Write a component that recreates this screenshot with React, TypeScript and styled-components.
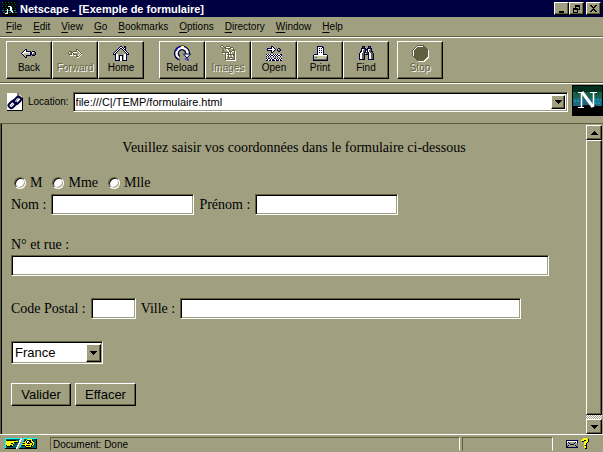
import React from "react";
import styled, { createGlobalStyle, css } from "styled-components";

const FACE = "#a0a080";
const SHADE = "#606040";
const NAVY = "#000040";

const Global = createGlobalStyle`
  *, *::before, *::after { box-sizing: border-box; }
  body { margin: 0; background: ${FACE}; color: #000; font: 10px/12px "Liberation Sans", Arial, sans-serif; }
  button, input, select { font: inherit; color: inherit; border-radius: 0; margin: 0; }
`;

const raised = css`
  background: ${FACE};
  border: 1px solid;
  border-color: #fff #000 #000 #fff;
  box-shadow: inset -1px -1px 0 ${SHADE};
`;

const sunken = css`
  background: #fff;
  border: 1px solid;
  border-color: ${SHADE} #fff #fff ${SHADE};
  box-shadow: inset 1px 1px 0 #000, inset -1px -1px 0 ${FACE};
  outline: none;
`;

const COLORS: Record<string, string> = {
  N: NAVY, W: "#ffffff", K: "#000000", S: SHADE, G: "#008040", Y: "#ffff00",
  C: "#00ffff", L: "#c0c0a0", T: "#006060", F: FACE,
};

const Drawing = styled.svg`
  display: block;
  flex: none;
`;

function Pixels({ rows }: { rows: string[] }) {
  const width = Math.max(...rows.map((r) => r.length));
  return (
    <Drawing width={width} height={rows.length} viewBox={`0 0 ${width} ${rows.length}`} shapeRendering="crispEdges" aria-hidden="true">
      {rows.flatMap((row, y) =>
        [...row].map((c, x) =>
          COLORS[c] ? <rect key={`${x}-${y}`} x={x} y={y} width="1" height="1" fill={COLORS[c]} /> : null
        )
      )}
    </Drawing>
  );
}

const back = [
  "....NN..........",
  "...NWN..........",
  "..NWWNNNNN.NNN..",
  ".NWWWWWWWNNWWSN.",
  "NWWLLLLLLNNWSSN.",
  ".NLLLLLLLNNSSSN.",
  "..NLLNNNNN.NNN..",
  "...NLN..........",
  "....NN..........",
];
const forward = [
  ".........SS......",
  ".........SWS.....",
  "..SSS.SSSSFWS....",
  ".SWFSSWWWWFFWS...",
  ".SFFSWSFFFFFFWS..",
  "..SSSWSSSSFFWSW..",
  "...WWW.WWSFWSW...",
  ".........SSSW....",
  "..........WW.....",
];
const home = [
  ".......NN..NN...",
  "......NWWN.NN...",
  ".....NWNNWNWN...",
  "....NWN..NWNN...",
  "...NWN....NWN...",
  "..NWN......NWN..",
  ".NWN........NWN.",
  "NWN..........NWN",
  "NNNWW......WWNNN",
  "..NWW.NNNN.WWN..",
  "..NWW.NWWN.WWN..",
  "..NWW.NWWN.WWN..",
  "..NWW.NWWN.WWN..",
  "..NWW.NWWN.WWN..",
  "..NNNNNWWNNNNN..",
];
const images = [
  ".SS.............",
  "SWWS..SSSS......",
  ".SFFSSWWWWSSS...",
  "..SFFSSSSSSWWS..",
  "...SFFWWSFFFFS..",
  "...SFFFWWSFFSSS.",
  "..SFFFFFWSSSWWSW",
  "..SSSSSSSWSWFFSW",
  "...WWSWWSWSWFFSW",
  ".....SWSSSSSSSSW",
  ".....SWWSWFFWSSW",
  ".....SWFSWFFWFSW",
  ".....SWFSSSSSFSW",
  ".....SWFFFWWFFSW",
  ".....SSSSSSSSSSW",
  "......WWWWWWWWWW",
];
const open = [
  ".....NN.........",
  ".....NWN........",
  ".NNNNNWWN...NN..",
  ".NWWWWWWWN.NWSN.",
  ".NNNNNWWN..NSSN.",
  ".....NWN....NN..",
  ".....NN.........",
  "................",
  "NWNWNWWNWNWNWWNN",
  "WNWNWNNWNWNWNNWN",
  "NWNWNWWNWNWNWWNW",
  "................",
  "NWNNWNWWNNWNWNWN",
  "WNWWNWNNWWNWNWNW",
  "NNWNNWNNNWNNNWNN",
];
const print = [
  "....NNNNNN.....",
  "....NWWWWNN....",
  "....NWNWNWN....",
  "....NWWWWWN....",
  "....NWNWNWN....",
  "....NWWWWWN....",
  "....NWNWNWN....",
  "....NWWWWWN....",
  ".NNNNWWWWWNNNN.",
  "NWWWWWWWWWWWWWN",
  "NLLLLLLLLLLLLLN",
  "NLGGLLLLLLLLLSN",
  "NLLLLLLLLLLLLSN",
  "NSSSSSSSSSSSSSN",
  "NNNNNNNNNNNNNNN",
];
const find = [
  "...NNN...NNN...",
  "...NSN...NSN...",
  "..NNNNN.NNNNN..",
  "..NWWSNNNWWSN..",
  "..NWSSNSNWSSN..",
  ".NNWSSNWNWSSNN.",
  ".NWWSNNSNNWSSN.",
  "NWWSSNWSSNWWSSN",
  "NWWSSNNNNNWWSSN",
  "NWWSSN...NWWSSN",
  "NWWSSN...NWWSSN",
  "NWWSSN...NWWSSN",
  "NWWSSN...NWWSSN",
  "NNNNNN...NNNNNN",
];
const envelope = [
  "NNNNNNNNNNNN",
  "NWWWWWWWWWWN",
  "NWNFFFFFFNWN",
  "NFFNFFFFNFFS",
  "NFFFNNNNFFFS",
  "NFNFFFFFFNFS",
  "NNFFFFFFFFNS",
  "NNNNNNNNNNNN",
];
const question = [
  "..YYYY..",
  ".YYYYYYK",
  "YYYKKYYK",
  ".KK.YYYK",
  "...YYYK.",
  "...YYK..",
  "...YYK..",
  "....KK..",
  "...YYK..",
  "...YYK..",
  "....KK..",
];
const security = [
  "CCCCCCCCCCCCCCCWW.CCCCCCCCCCCCCC",
  "CTTTTTTTTTTTTTTWW.CTTTYYYYYTTTTK",
  "CTKKKKKKKKKTTTWW..CTKYKKKKYKTTTK",
  "CYYYYYYYYYYYYTWW.CTKYKWWKKYYKTTK",
  "CYYYYYYYYKKKKTW..CYYYKWKYKKYYTTK",
  "CYYYYYKKYTTTTWW.CTKKYYKKKYYKYTTK",
  "CYYYYYYYKTTTTW..CYYYYYYYYYYKYTTK",
  "CKYYYKKYTTTTWW.CTKKKYKKKKYKYTTTK",
  "CTKKKKKKTTTTW..CTTTTKYYYYYKTTTTK",
  "CTTTTTTTTTTWW.CTTTTTTKKKKKTTTTTK",
  "KKKKKKKKKKKW..KKKKKKKKKKKKKKKKKK",
];
const minimize = [
  "........", "........", "........", "........", "........", "........", ".KKKKK..", ".KKKKK..",
];
const restore = [
  "..KKKKK.", "..KKKKK.", "..K...K.", "KKKKK.K.", "KKKKKKK.", "K...K...", "K...K...", "KKKKK...",
];
const close = [
  "KK...KK.", ".KK.KK..", "..KKK...", "...K....", "..KKK...", ".KK.KK..", "KK...KK.",
];
const upArrow = ["...K...", "..KKK..", ".KKKKK.", "KKKKKKK"];
const downArrow = ["KKKKKKK", ".KKKKK.", "..KKK..", "...K..."];

function ReloadIcon() {
  return (
    <Drawing width="17" height="17" viewBox="0 0 17 17" aria-hidden="true">
      <path d="M5 13 A5.5 5.5 0 1 1 13.5 9" fill="none" stroke={NAVY} strokeWidth="5" />
      <path d="M5 13 A5.5 5.5 0 1 1 13.5 9" fill="none" stroke="#fff" strokeWidth="2.5" />
      <path d="M2 6 A6.5 6.5 0 0 1 7 1.5" fill="none" stroke="#0000ff" />
      <path d="M7 1.5 H10" stroke="#ffff00" />
      <path d="M9.5 9 H16.5 L13 13 Z" fill="#fff" stroke={NAVY} />
      <path d="M2 12 L6 15.5" stroke={NAVY} />
      <path d="M11 14 H14 V16" fill="none" stroke="#0000ff" />
    </Drawing>
  );
}

function StopIcon() {
  return (
    <Drawing width="17" height="17" viewBox="0 0 17 17" shapeRendering="crispEdges" aria-hidden="true">
      <path d="M6 1 H12 L17 6 V12 L12 17 H6 L1 12 V6 Z" fill="#fff" />
      <path d="M5 0 H11 L16 5 V11 L11 16 H5 L0 11 V5 Z" fill={SHADE} />
      <path d="M1.5 11 V5.500 L5.500 1.500 H11" fill="none" stroke="#fff" />
    </Drawing>
  );
}

function LinkPageIcon() {
  return (
    <Drawing width="16" height="18" viewBox="0 0 16 18" aria-hidden="true">
      <path d="M0 0 H11 L16 5 V18 H0 Z" fill="#fff" />
      <path d="M11 0 V5 H16" fill="#e0e0c0" stroke="#000" />
      <path d="M15.5 5 V17.5 H0" fill="none" stroke="#000" />
      <g fill="none" stroke={NAVY} strokeWidth="2">
        <rect x="1" y="9" width="8" height="5" rx="2" transform="rotate(-45 5 11)" />
        <rect x="6" y="5" width="8" height="5" rx="2" transform="rotate(-45 10 7)" />
      </g>
      <path d="M3 14 L7 10 M8 9 L12 5" stroke="#a0a0c0" />
    </Drawing>
  );
}

function NetscapeMark({ size }: { size: number }) {
  return (
    <Drawing width={size} height={size} viewBox="0 0 31 31" aria-hidden="true">
      <rect width="31" height="31" fill="#000" />
      <rect x="1" y="1" width="29" height="7" fill="#003020" />
      <rect x="1" y="7" width="29" height="6" fill="#186048" />
      <rect x="1" y="13" width="29" height="8" fill="#206880" />
      <path d="M2 3h3M8 4h4M16 2h3M22 4h5M4 8h4M12 7h3M24 9h4" stroke="#001810" strokeDasharray="1 1" />
      <path d="M2 16h5M22 15h7M20 18h9" stroke="#00c0d0" strokeDasharray="2 1" />
      <path d="M1 25 Q7 20 16 20 T30 23 V30 H1 Z" fill="#000" />
      <g fill="none" stroke="#fff">
        <path d="M6 7.5 H12 M18 7.5 H25 M6 22.5 H12" strokeWidth="1" />
        <path d="M9.5 7 V22 M21.5 7 V22" strokeWidth="1.5" />
        <path d="M10 7 L21 22" strokeWidth="3" />
      </g>
    </Drawing>
  );
}

function TitleMark() {
  return (
    <Drawing width="15" height="15" viewBox="0 0 15 15" shapeRendering="crispEdges" aria-hidden="true">
      <rect width="15" height="15" fill="#000" />
      <path d="M0 1h15M1 3h14M0 5h15M1 7h14" stroke="#006048" strokeDasharray="1 2" />
      <path d="M0 9h15M1 11h14" stroke="#208090" strokeDasharray="2 1" />
      <path d="M0 15 L4 12 H11 L15 15 Z" fill="#000" />
      <path d="M3 12.5h3M5.500 12V8M6 5h2v3l3 4M9.500 6v3" stroke="#fff" fill="none" />
    </Drawing>
  );
}

const Window = styled.div`
  min-height: 100vh;
  display: flex;
  flex-direction: column;
`;

const TitleBar = styled.header`
  display: flex;
  align-items: center;
  height: 17px;
  padding: 0 2px;
  background: ${NAVY};
  color: #fff;
`;

const Title = styled.h1`
  flex: 1;
  margin: 0 0 0 3px;
  font-size: 11px;
  line-height: 14px;
  white-space: nowrap;
`;

const CaptionButton = styled.button<{ $apart?: boolean }>`
  ${raised}
  display: flex;
  align-items: center;
  justify-content: center;
  width: 15px;
  height: 13px;
  padding: 0;
  margin-left: ${(p) => (p.$apart ? 2 : 0)}px;
`;

const MenuBar = styled.nav`
  display: flex;
  align-items: center;
  gap: 11px;
  height: 19px;
  padding: 0 6px;
`;

const MenuButton = styled.button`
  border: 0;
  padding: 0;
  background: none;
  u { text-underline-offset: 2px; }
`;

const groove = css`
  border-top: 1px solid ${SHADE};
  box-shadow: inset 0 1px 0 #fff;
`;

const Toolbar = styled.div`
  ${groove}
  display: flex;
  padding: 4px 6px 3px;
`;

const ToolGroup = styled.div<{ $gap: number }>`
  display: flex;
  margin-left: ${(p) => p.$gap}px;
`;

const ToolButton = styled.button`
  ${raised}
  width: 46px;
  height: 38px;
  padding: 2px 0 0;
  display: flex;
  flex-direction: column;
  align-items: center;
  &:disabled { color: ${SHADE}; text-shadow: 1px 1px 0 #fff; }
`;

const IconSlot = styled.span`
  display: flex;
  align-items: center;
  height: 18px;
`;

const LocationBar = styled.div`
  ${groove}
  display: flex;
  align-items: center;
  height: 41px;
  padding: 0 0 2px 7px;
`;

const LocationLabel = styled.label`
  margin: 0 4px 0 5px;
`;

const Combo = styled.div`
  ${sunken}
  display: flex;
  flex: 1;
  height: 20px;
  padding: 2px;
`;

const ComboInput = styled.input`
  flex: 1;
  min-width: 0;
  border: 0;
  padding: 0;
  background: none;
  outline: none;
  font-size: 11px;
`;

const ArrowButton = styled.button`
  ${raised}
  display: flex;
  flex: none;
  align-items: center;
  justify-content: center;
  width: 14px;
  height: 14px;
  padding: 0;
`;

const LogoSlot = styled.div`
  align-self: flex-start;
  margin: 2px 0 0 4px;
`;

const Viewport = styled.div`
  flex: 1;
  display: flex;
  border-top: 1px solid ${SHADE};
  border-left: 1px solid ${SHADE};
  box-shadow: inset 1px 0 0 #000;
`;

const Page = styled.main`
  flex: 1;
  padding: 15px 9px 8px 10px;
  font: 14px/18px "Liberation Serif", "Times New Roman", serif;
`;

const Intro = styled.p`
  margin: 0 0 17px;
  text-align: center;
`;

const FormRow = styled.div<{ $after: number; $gap?: number }>`
  display: flex;
  flex-wrap: wrap;
  align-items: center;
  gap: 1px ${(p) => p.$gap ?? 5}px;
  margin-bottom: ${(p) => p.$after}px;
`;

const Choice = styled.label`
  display: flex;
  align-items: center;
  gap: 4px;
  margin: 0 3px;
`;

const Radio = styled.input.attrs({ type: "radio" })`
  ${sunken}
  appearance: none;
  width: 12px;
  height: 12px;
  border-radius: 50%;
  &:checked { background: radial-gradient(#000 0 2px, #fff 3px); }
`;

const Field = styled.input.attrs({ type: "text" })<{ $width: string }>`
  ${sunken}
  width: ${(p) => p.$width};
  height: 21px;
  padding: 2px 3px;
`;

const SelectFrame = styled.div`
  ${sunken}
  display: flex;
  position: relative;
  width: 92px;
  height: 23px;
  padding: 2px;
  align-items: stretch;
`;

const Country = styled.select`
  appearance: none;
  flex: 1;
  border: 0;
  padding: 0 1px;
  background: none;
  outline: none;
  font: 13px/17px "Liberation Sans", Arial, sans-serif;
`;

const SelectArrow = styled.span`
  ${raised}
  position: absolute;
  top: 2px;
  right: 1px;
  bottom: 1px;
  width: 15px;
  display: flex;
  align-items: center;
  justify-content: center;
  pointer-events: none;
`;

const FormButton = styled.button`
  ${raised}
  min-width: 60px;
  height: 23px;
  padding: 0 9px;
  font: 13px/17px "Liberation Sans", Arial, sans-serif;
`;

const ScrollBar = styled.div`
  display: flex;
  flex-direction: column;
  width: 16px;
  margin: 1px 1px 0 0;
  background: repeating-conic-gradient(#fff 0 25%, ${FACE} 0 50%) 0 0 / 2px 2px;
`;

const ScrollButton = styled(ArrowButton)`
  width: 16px;
  height: 15px;
`;

const ScrollThumb = styled.div`
  ${raised}
  flex: 1;
  margin-bottom: 4px;
`;

const StatusBar = styled.footer`
  display: grid;
  grid-template-columns: 43px 1fr 91px 48px;
  align-items: center;
  column-gap: 2px;
  height: 18px;
  padding: 0 0 0 5px;
  border-top: 1px solid #fff;
`;

const StatusCell = styled.div`
  height: 14px;
  padding: 1px 0 0 2px;
  border: 1px solid;
  border-color: ${SHADE} #fff ${FACE} ${SHADE};
`;

const MailIcons = styled.div`
  display: flex;
  align-items: center;
  gap: 3px;
  padding-left: 11px;
`;

const menus = ["File", "Edit", "View", "Go", "Bookmarks", "Options", "Directory", "Window", "Help"];

type Tool = { label: string; icon: React.ReactNode; disabled?: boolean };
const toolGroups: { gap: number; tools: Tool[] }[] = [
  {
    gap: 0,
    tools: [
      { label: "Back", icon: <Pixels rows={back} /> },
      { label: "Forward", icon: <Pixels rows={forward} />, disabled: true },
      { label: "Home", icon: <Pixels rows={home} /> },
    ],
  },
  {
    gap: 15,
    tools: [
      { label: "Reload", icon: <ReloadIcon /> },
      { label: "Images", icon: <Pixels rows={images} />, disabled: true },
      { label: "Open", icon: <Pixels rows={open} /> },
      { label: "Print", icon: <Pixels rows={print} /> },
      { label: "Find", icon: <Pixels rows={find} /> },
    ],
  },
  { gap: 8, tools: [{ label: "Stop", icon: <StopIcon />, disabled: true }] },
];

export default function App() {
  return (
    <Window>
      <Global />
      <TitleBar>
        <TitleMark />
        <Title>Netscape - [Exemple de formulaire]</Title>
        <CaptionButton aria-label="Minimize"><Pixels rows={minimize} /></CaptionButton>
        <CaptionButton aria-label="Restore"><Pixels rows={restore} /></CaptionButton>
        <CaptionButton aria-label="Close" $apart><Pixels rows={close} /></CaptionButton>
      </TitleBar>
      <MenuBar>
        {menus.map((m) => (
          <MenuButton key={m}><u>{m[0]}</u>{m.slice(1)}</MenuButton>
        ))}
      </MenuBar>
      <Toolbar>
        {toolGroups.map((g) => (
          <ToolGroup key={g.tools[0].label} $gap={g.gap}>
            {g.tools.map((t) => (
              <ToolButton key={t.label} disabled={t.disabled}>
                <IconSlot>{t.icon}</IconSlot>
                {t.label}
              </ToolButton>
            ))}
          </ToolGroup>
        ))}
      </Toolbar>
      <LocationBar>
        <LinkPageIcon />
        <LocationLabel htmlFor="location">Location:</LocationLabel>
        <Combo>
          <ComboInput id="location" defaultValue="file:///C|/TEMP/formulaire.html" />
          <ArrowButton aria-label="Show history"><Pixels rows={downArrow} /></ArrowButton>
        </Combo>
        <LogoSlot><NetscapeMark size={31} /></LogoSlot>
      </LocationBar>
      <Viewport>
        <Page>
          <Intro>Veuillez saisir vos coordonnées dans le formulaire ci-dessous</Intro>
          <form onSubmit={(e) => e.preventDefault()}>
            <FormRow $after={2} $gap={4}>
              {["M", "Mme", "Mlle"].map((c) => (
                <Choice key={c}><Radio name="title" value={c} />{c}</Choice>
              ))}
            </FormRow>
            <FormRow $after={21}>
              <label htmlFor="nom">Nom :</label>
              <Field id="nom" $width="143px" />
              <label htmlFor="prenom">Prénom :</label>
              <Field id="prenom" $width="143px" />
            </FormRow>
            <FormRow $after={22}>
              <label htmlFor="rue">N° et rue :</label>
              <Field id="rue" $width="95%" />
            </FormRow>
            <FormRow $after={22}>
              <label htmlFor="code">Code Postal :</label>
              <Field id="code" $width="45px" />
              <label htmlFor="ville">Ville :</label>
              <Field id="ville" $width="341px" />
            </FormRow>
            <FormRow $after={19}>
              <SelectFrame>
                <Country aria-label="Pays" defaultValue="France"><option>France</option></Country>
                <SelectArrow><Pixels rows={downArrow} /></SelectArrow>
              </SelectFrame>
            </FormRow>
            <FormRow $after={0} $gap={4}>
              <FormButton type="submit">Valider</FormButton>
              <FormButton type="reset">Effacer</FormButton>
            </FormRow>
          </form>
        </Page>
        <ScrollBar>
          <ScrollButton aria-label="Scroll up"><Pixels rows={upArrow} /></ScrollButton>
          <ScrollThumb />
          <ScrollButton aria-label="Scroll down"><Pixels rows={downArrow} /></ScrollButton>
        </ScrollBar>
      </Viewport>
      <StatusBar>
        <Pixels rows={security} />
        <StatusCell>Document: Done</StatusCell>
        <StatusCell />
        <MailIcons><Pixels rows={envelope} /><Pixels rows={question} /></MailIcons>
      </StatusBar>
    </Window>
  );
}
